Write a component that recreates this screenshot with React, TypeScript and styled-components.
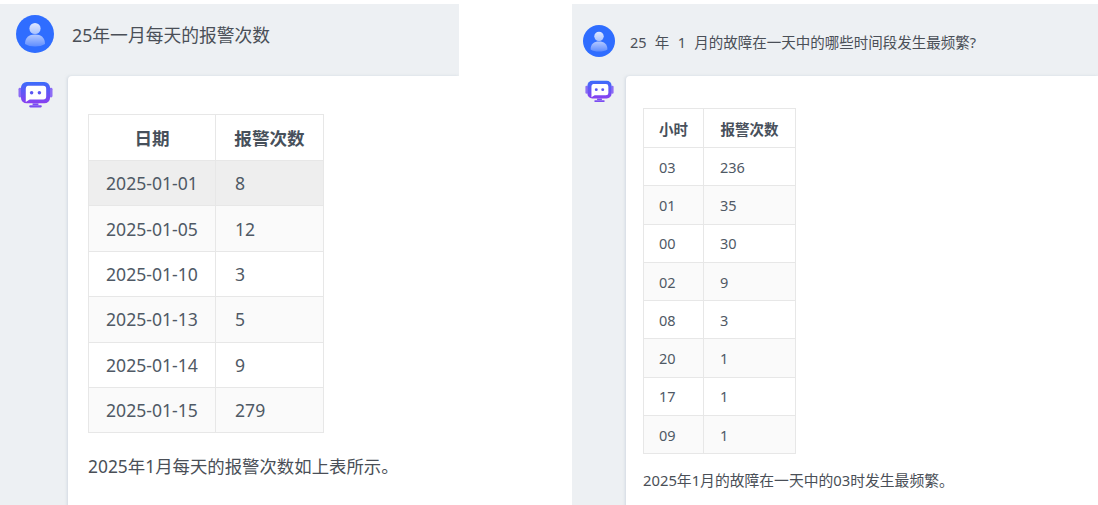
import React from "react";
import styled, { createGlobalStyle } from "styled-components";

const Global = createGlobalStyle`
  html, body { margin: 0; padding: 0; background: #fff; }
  body { font-family: "Noto Sans", "Noto Sans CJK SC", sans-serif; color: #4b5563; overflow: hidden; }
`;

const Page = styled.div`
  display: flex;
  width: 1098px;
  height: 505px;
  padding-top: 4px;
  box-sizing: border-box;
  overflow: hidden;
`;

type V = { $v: "large" | "small" };

const Panel = styled.section<V>`
  background: #edf0f3;
  height: 501px;
  box-sizing: border-box;
  overflow: hidden;
  width: ${(p) => (p.$v === "large" ? "459px" : "526px")};
  margin-left: ${(p) => (p.$v === "large" ? "0" : "113px")};
  padding-top: ${(p) => (p.$v === "large" ? "11px" : "21px")};
`;

const UserRow = styled.div<V>`
  display: flex;
  align-items: center;
  height: ${(p) => (p.$v === "large" ? "38px" : "32px")};
  padding-left: ${(p) => (p.$v === "large" ? "16px" : "11px")};
  gap: ${(p) => (p.$v === "large" ? "18px" : "15px")};
`;

const Question = styled.div<V>`
  font-size: ${(p) => (p.$v === "large" ? "17.8px" : "14.5px")};
  word-spacing: ${(p) => (p.$v === "large" ? "0" : "4.5px")};
  color: #4a4f57;
  white-space: nowrap;
`;

const BotRow = styled.div<V>`
  display: flex;
  align-items: flex-start;
  margin-top: ${(p) => (p.$v === "large" ? "23px" : "19px")};
  padding-left: ${(p) => (p.$v === "large" ? "18px" : "13px")};
  gap: ${(p) => (p.$v === "large" ? "15px" : "12px")};
`;

const BotSlot = styled.div<V>`
  flex: none;
  padding-top: ${(p) => (p.$v === "large" ? "5px" : "4px")};
  display: flex;
`;

const Card = styled.div<V>`
  flex: 1;
  background: #fff;
  border-radius: 4px 0 0 0;
  box-shadow: -1px 0 3px rgba(190, 198, 212, 0.55);
  height: 440px;
  box-sizing: border-box;
  padding: ${(p) => (p.$v === "large" ? "38px 0 0 20px" : "32px 0 0 17px")};
`;

const Table = styled.table<V>`
  border-collapse: collapse;
  table-layout: fixed;
  font-size: ${(p) => (p.$v === "large" ? "17.6px" : "14.5px")};
  color: #4f5965;
  width: ${(p) => (p.$v === "large" ? "235px" : "152px")};
`;

const Head = styled.th<V>`
  border: 1px solid #e7e7e7;
  background: #fff;
  font-weight: 700;
  color: #47505b;
  text-align: center;
  padding: 0;
  height: ${(p) => (p.$v === "large" ? "46px" : "39px")};
  box-sizing: border-box;
`;

const Row = styled.tr<{ $hover?: boolean }>`
  background: ${(p) => (p.$hover ? "#eeeeee" : "#fff")};
  &:nth-child(even) { background: #fafafa; }
`;

const Cell = styled.td<V>`
  border: 1px solid #e7e7e7;
  padding: ${(p) => (p.$v === "large" ? "0 0 0 17px" : "0 0 0 15px")};
  height: ${(p) => (p.$v === "large" ? "45.4px" : "38.3px")};
  box-sizing: border-box;
  &:nth-child(2) {
    padding-left: ${(p) => (p.$v === "large" ? "19px" : "16px")};
  }
`;

const Answer = styled.p<V>`
  margin: ${(p) => (p.$v === "large" ? "20px 0 0" : "14px 0 0")};
  font-size: ${(p) => (p.$v === "large" ? "17.4px" : "14.8px")};
  line-height: ${(p) => (p.$v === "large" ? "26px" : "24px")};
  color: #4a4f57;
  white-space: nowrap;
`;

function UserAvatar({ size, id }: { size: number; id: string }) {
  return (
    <svg width={size} height={size} viewBox="0 0 38 38" style={{ flex: "none" }}>
      <defs>
        <linearGradient id={id + "h"} x1="0" y1="0" x2="0" y2="1">
          <stop offset="0" stopColor="#dfe8ff" />
          <stop offset="1" stopColor="#a9c2ff" />
        </linearGradient>
        <linearGradient id={id + "b"} x1="0" y1="0" x2="0" y2="1">
          <stop offset="0" stopColor="#b4c9ff" />
          <stop offset="1" stopColor="#5f8dff" />
        </linearGradient>
      </defs>
      <circle cx="19" cy="19" r="19" fill="#2f6dff" />
      <circle cx="19" cy="13.5" r="5.6" fill={`url(#${id}h)`} />
      <path d="M9 29c0-6.5 4-9.5 10-9.5s10 3 10 9.5c-2.5 1.7-6 2.5-10 2.5s-7.500-.8-10-2.500z" fill={`url(#${id}b)`} />
    </svg>
  );
}

function BotIcon({ width, id }: { width: number; id: string }) {
  return (
    <svg width={width} height={width * (28 / 36)} viewBox="0 0 36 28">
      <defs>
        <linearGradient id={id} x1="0" y1="0" x2="0" y2="1">
          <stop offset="0" stopColor="#3b6dfb" />
          <stop offset="1" stopColor="#8a3ff0" />
        </linearGradient>
      </defs>
      <rect x="0.500" y="7" width="3" height="10" rx="1.500" fill="#8d6cf5" />
      <rect x="32.500" y="7" width="3" height="10" rx="1.500" fill="#8d6cf5" />
      <rect x="3" y="1" width="30" height="22" rx="6" fill={`url(#${id})`} />
      <path d="M10 5h16a3 3 0 0 1 3 3v8a3 3 0 0 1-3 3H12l-4 2.500V8a3 3 0 0 1 2-3z" fill="#fff" />
      <circle cx="14" cy="12" r="1.800" fill="#5a56f3" />
      <circle cx="22" cy="12" r="1.800" fill="#5a56f3" />
      <path d="M15 23h6v2h-6z" fill="#7b4df2" />
      <rect x="11.500" y="25" width="13" height="2.200" rx="1.100" fill="#7b4df2" />
    </svg>
  );
}

type Block = {
  v: "large" | "small";
  question: string;
  cols: [number, number];
  head: [string, string];
  rows: [string, string][];
  answer: string;
  hoverFirst?: boolean;
};

const blocks: Block[] = [
  {
    v: "large",
    question: "25年一月每天的报警次数",
    cols: [127, 108],
    head: ["日期", "报警次数"],
    rows: [
      ["2025-01-01", "8"],
      ["2025-01-05", "12"],
      ["2025-01-10", "3"],
      ["2025-01-13", "5"],
      ["2025-01-14", "9"],
      ["2025-01-15", "279"],
    ],
    answer: "2025年1月每天的报警次数如上表所示。",
    hoverFirst: true,
  },
  {
    v: "small",
    question: "25 年 1 月的故障在一天中的哪些时间段发生最频繁?",
    cols: [60, 92],
    head: ["小时", "报警次数"],
    rows: [
      ["03", "236"],
      ["01", "35"],
      ["00", "30"],
      ["02", "9"],
      ["08", "3"],
      ["20", "1"],
      ["17", "1"],
      ["09", "1"],
    ],
    answer: "2025年1月的故障在一天中的03时发生最频繁。",
  },
];

export default function App() {
  return (
    <Page>
      <Global />
      {blocks.map((b, i) => (
        <Panel key={i} $v={b.v}>
          <UserRow $v={b.v}>
            <UserAvatar size={b.v === "large" ? 38 : 32} id={`u${i}`} />
            <Question $v={b.v}>{b.question}</Question>
          </UserRow>
          <BotRow $v={b.v}>
            <BotSlot $v={b.v}>
              <BotIcon width={b.v === "large" ? 35 : 29} id={`b${i}`} />
            </BotSlot>
            <Card $v={b.v}>
              <Table $v={b.v}>
                <colgroup>
                  <col style={{ width: b.cols[0] }} />
                  <col style={{ width: b.cols[1] }} />
                </colgroup>
                <thead>
                  <tr>
                    <Head $v={b.v}>{b.head[0]}</Head>
                    <Head $v={b.v}>{b.head[1]}</Head>
                  </tr>
                </thead>
                <tbody>
                  {b.rows.map((r, j) => (
                    <Row key={j} $hover={b.hoverFirst && j === 0}>
                      <Cell $v={b.v}>{r[0]}</Cell>
                      <Cell $v={b.v}>{r[1]}</Cell>
                    </Row>
                  ))}
                </tbody>
              </Table>
              <Answer $v={b.v}>{b.answer}</Answer>
            </Card>
          </BotRow>
        </Panel>
      ))}
    </Page>
  );
}
